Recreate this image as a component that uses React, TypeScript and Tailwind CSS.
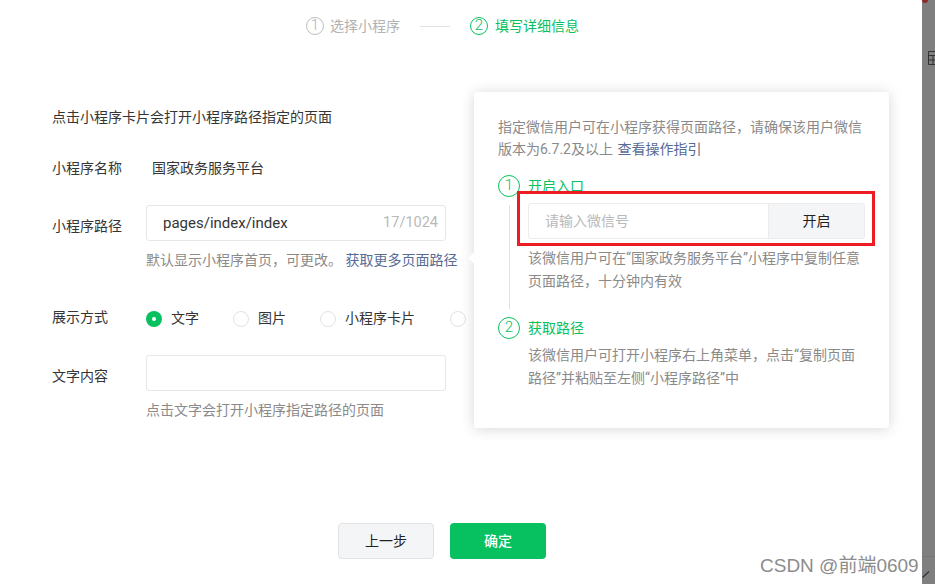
const cjk = "font-['Roboto','Noto_Sans_CJK_SC',sans-serif]";

const StepDot = ({ n, active, big }: { n: number; active?: boolean; big?: boolean }) => (
  <span
    className={`flex shrink-0 items-center justify-center rounded-full border font-['Roboto',sans-serif] font-light ${
      big ? 'h-[22px] w-[22px] text-[15px]' : 'h-[18px] w-[18px] text-[15px]'
    } ${active ? 'border-[#07c160] text-[#07c160]' : 'border-[#bdbdbd] text-[#b2b2b2]'}`}>
    {n}
  </span>
);

const Radio = ({ label, checked }: { label?: string; checked?: boolean }) => (
  <div className="flex items-start gap-[9px]">
    {checked ? (
      <span className="mt-[3px] flex h-4 w-4 items-center justify-center rounded-full bg-[#07c160]">
        <span className="h-1 w-1 rounded-full bg-white" />
      </span>
    ) : (
      <span className="mt-[3px] h-4 w-4 rounded-full border border-[#e2e2e2] bg-white" />
    )}
    {label && <span className="text-sm leading-5 text-[#353535]">{label}</span>}
  </div>
);

const Popover = () => (
  <div className="absolute left-[474px] top-[92px] h-[336px] w-[415px] rounded-[3px] bg-white px-6 pt-6 text-sm text-[#8a8a8a] shadow-[0_1px_14px_rgba(0,0,0,0.16)]">
    <span className="absolute left-[-4px] top-[162px] h-2 w-2 rotate-45 bg-white" />
    <p className="leading-[22px]">
      指定微信用户可在小程序获得页面路径，请确保该用户微信
      <br />
      版本为6.7.2及以上 <span className="ml-px text-[#576b95]">查看操作指引</span>
    </p>
    <div className="mt-[15px] flex gap-2">
      <div className="flex w-[22px] flex-col items-center">
        <StepDot n={1} active big />
        <span className="mb-2 mt-2 w-px flex-1 bg-[#e2e2e2]" />
      </div>
      <div className="flex-1 pb-[25px]">
        <div className="leading-[22px] text-[#07c160]">开启入口</div>
        <div className="mt-1.5 flex h-9 w-[337px] rounded-[3px] border border-[#ececec]">
          <div className="flex flex-1 items-center pl-4 text-[#b9b9b9]">请输入微信号</div>
          <div className="flex w-[96px] items-center justify-center border-l border-[#ececec] bg-[#f4f5f7] text-[#222]">
            开启
          </div>
        </div>
        <p className="mt-2 leading-[22.5px]">
          该微信用户可在“国家政务服务平台”小程序中复制任意
          <br />
          页面路径，十分钟内有效
        </p>
      </div>
    </div>
    <div className="flex gap-2">
      <StepDot n={2} active big />
      <div>
        <div className="leading-[22px] text-[#07c160]">获取路径</div>
        <p className="mt-[5px] leading-[22.5px]">
          该微信用户可打开小程序右上角菜单，点击“复制页面
          <br />
          路径”并粘贴至左侧“小程序路径”中
        </p>
      </div>
    </div>
  </div>
);

export default function App() {
  return (
    <div className={`relative flex h-[584px] w-[935px] overflow-hidden bg-white ${cjk}`}>
      <main className="flex w-[922px] flex-col">
        <div className="flex h-[52px] items-center pl-[306px] text-sm">
          <StepDot n={1} />
          <span className="ml-1.5 text-[#b2b2b2]">选择小程序</span>
          <span className="ml-5 h-px w-[30px] bg-[#e2e2e2]" />
          <span className="ml-5">
            <StepDot n={2} active />
          </span>
          <span className="ml-[7px] text-[#07c160]">填写详细信息</span>
        </div>

        <div className="mt-[55px] pl-[52px] text-sm text-[#353535]">
          <p className="h-5 leading-5">点击小程序卡片会打开小程序路径指定的页面</p>

          <div className="mt-[31px] flex h-5 items-center">
            <span className="w-[94px]">小程序名称</span>
            <span className="pl-[6px]">国家政务服务平台</span>
          </div>

          <div className="mt-[27px] flex">
            <span className="mt-[11px] w-[94px] leading-5">小程序路径</span>
            <div>
              <div className="flex h-9 w-[300px] items-center justify-between rounded-[3px] border border-[#e7e7e7] pl-4 pr-[7px]">
                <span className="pt-0.5 text-[15px]">pages/index/index</span>
                <span className="text-[14.5px] text-[#b9b9b9]">17/1024</span>
              </div>
              <p className="mt-2 leading-[22px] text-[#8a8a8a]">
                默认显示小程序首页，可更改。 <span className="text-[#576b95]">获取更多页面路径</span>
              </p>
            </div>
          </div>

          <div className="mt-[36px] flex h-5">
            <span className="w-[94px] leading-5">展示方式</span>
            <div className="mt-px flex gap-[34px]">
              <Radio label="文字" checked />
              <Radio label="图片" />
              <Radio label="小程序卡片" />
              <span className="ml-px">
                <Radio />
              </span>
            </div>
          </div>

          <div className="mt-[28px] flex">
            <span className="mt-[11px] w-[94px] leading-5">文字内容</span>
            <div>
              <div className="h-9 w-[300px] rounded-[3px] border border-[#e7e7e7]" />
              <p className="mt-2 leading-[22px] text-[#8a8a8a]">点击文字会打开小程序指定路径的页面</p>
            </div>
          </div>
        </div>

        <div className="mt-[102px] flex justify-center gap-4 pr-[38px] text-sm">
          <button className="h-9 w-24 rounded border border-[#e2e2e2] bg-[#f4f5f7] text-[#222]">上一步</button>
          <button className="h-9 w-24 rounded bg-[#07c160] font-medium text-white">确定</button>
        </div>
      </main>

      <aside className="relative w-[13px] overflow-hidden bg-[#7f7f7f]">
        <span className="absolute left-0 top-[-3px] h-[6px] w-[6px] rounded-full bg-[#8e2a2f]" />
        <svg className="absolute left-[6px] top-[51px]" width="7" height="14" viewBox="0 0 7 14" fill="none" stroke="#333" strokeWidth="1">
          <path d="M7 .5H.5v13H7M.5 4.5H7M.5 9H7M5 4.5v9" />
        </svg>
        <span className="absolute left-0 top-[556px] h-px w-full bg-[#767676]" />
        <svg className="absolute left-0 top-[570px]" width="8" height="8" viewBox="0 0 8 8" fill="none" stroke="#333" strokeWidth="1.2">
          <path d="M.5 7.5 7 1.5" />
        </svg>
      </aside>

      <Popover />

      <div className="absolute left-[517px] top-[191px] h-[55px] w-[358px] border-[3px] border-[#ed1c24]" />
      <span className="absolute left-[760px] top-[554px] font-['Liberation_Sans','Noto_Sans_CJK_SC',sans-serif] text-[19px] leading-6 text-[#8c8c8c]">
        CSDN @前端0609
      </span>
    </div>
  );
}
